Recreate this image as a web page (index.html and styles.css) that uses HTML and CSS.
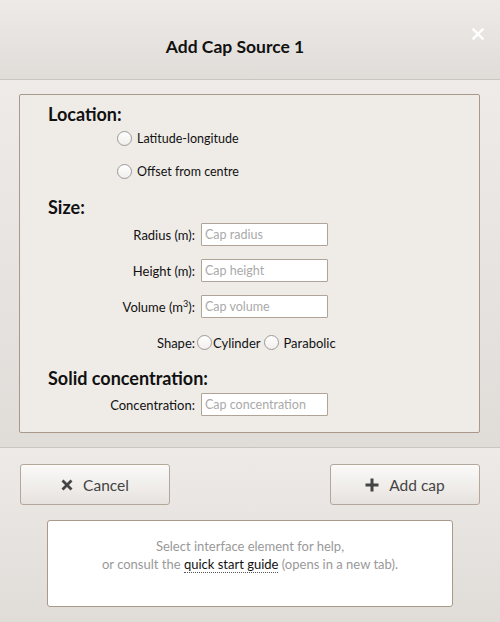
FILE: index.html
```html
<!DOCTYPE html>
<html>
<head>
<meta charset="utf-8">
<link rel="stylesheet" href="styles.css">
</head>
<body>
<div class="dialog">
  <header class="dlg-head">
    <h1 class="title">Add Cap Source 1</h1>
    <button class="close" aria-label="Close">
      <svg width="12" height="12" viewBox="0 0 12 12"><path d="M1.5 1.5 L10.5 10.5 M10.5 1.5 L1.5 10.5" stroke="#fff" stroke-width="2.4" stroke-linecap="square"/></svg>
    </button>
  </header>
  <main class="dlg-body">
    <section class="panel">
      <h2 class="heading">Location:</h2>
      <label class="radio-row"><input type="radio" name="loc" class="radio"><span>Latitude-longitude</span></label>
      <label class="radio-row second"><input type="radio" name="loc" class="radio"><span>Offset from centre</span></label>

      <h2 class="heading size">Size:</h2>
      <div class="field">
        <span class="lbl">Radius (m):</span>
        <input class="txt" type="text" placeholder="Cap radius">
      </div>
      <div class="field">
        <span class="lbl">Height (m):</span>
        <input class="txt" type="text" placeholder="Cap height">
      </div>
      <div class="field">
        <span class="lbl">Volume (m<sup>3</sup>):</span>
        <input class="txt" type="text" placeholder="Cap volume">
      </div>
      <div class="field">
        <span class="lbl">Shape:</span>
        <span class="shape">
          <label class="opt"><input type="radio" name="shape" class="radio"><span>Cylinder</span></label>
          <label class="opt"><input type="radio" name="shape" class="radio"><span>Parabolic</span></label>
        </span>
      </div>

      <h2 class="heading solid">Solid concentration:</h2>
      <div class="field conc">
        <span class="lbl">Concentration:</span>
        <input class="txt" type="text" placeholder="Cap concentration">
      </div>
    </section>
  </main>
  <footer class="dlg-foot">
    <div class="actions">
      <button class="btn">
        <svg width="12" height="12" viewBox="0 0 12 12"><path d="M1.5 1.5 L10.5 10.5 M10.5 1.5 L1.5 10.5" stroke="#444" stroke-width="2.8" stroke-linecap="butt"/></svg>
        <span>Cancel</span>
      </button>
      <button class="btn">
        <svg width="14" height="14" viewBox="0 0 14 14"><path d="M7 0.5 V13.5 M0.5 7 H13.5" stroke="#444" stroke-width="3"/></svg>
        <span>Add cap</span>
      </button>
    </div>
    <div class="help">
      <p>Select interface element for help,<br>or consult the <a class="guide" href="#">quick start guide</a> (opens in a new tab).</p>
    </div>
  </footer>
</div>
</body>
</html>
```

FILE: styles.css
```css
* { box-sizing: border-box; }
html, body { margin: 0; padding: 0; }
body {
  width: 500px;
  height: 622px;
  overflow: hidden;
  font-family: "Lato", "Liberation Sans", sans-serif;
  color: #111;
  background: #e0dcd8;
}
.dialog {
  width: 500px;
  height: 622px;
  display: flex;
  flex-direction: column;
}
.dlg-head {
  position: relative;
  height: 80px;
  flex: none;
  display: flex;
  align-items: center;
  justify-content: center;
  padding-right: 30px;
  background: linear-gradient(#eeeae7, #e0dcd8);
  border-bottom: 1px solid #c9c5c1;
}
.title {
  margin: 0;
  padding-top: 14px;
  font-size: 17.5px;
  font-weight: 700;
  color: #111;
}
.close {
  position: absolute;
  right: 15px;
  top: 27px;
  width: 14px;
  height: 14px;
  padding: 0;
  border: 0;
  background: none;
  display: flex;
  align-items: center;
  justify-content: center;
}
.dlg-body {
  height: 368px;
  flex: none;
  padding: 14px 20px 0 19px;
  background: linear-gradient(#efebe8, #e0dcd8);
  border-bottom: 1px solid #c9c5c1;
}
.panel {
  height: 339px;
  border: 1px solid #a8998b;
  border-radius: 2px;
  background: #efece8;
  padding: 6px 0 0 0;
}
.heading {
  margin: 0 0 0 28px;
  height: 26px;
  line-height: 26px;
  font-size: 18px;
  font-weight: 700;
}
.radio-row {
  display: flex;
  align-items: center;
  height: 22px;
  margin-left: 97px;
  font-size: 12.5px;
  gap: 5px;
}
.radio-row.second { margin-top: 11px; }
.radio {
  appearance: none;
  -webkit-appearance: none;
  margin: 0;
  width: 15px;
  height: 15px;
  border: 1px solid #9c9a98;
  border-radius: 50%;
  background: linear-gradient(#ffffff, #f1efed);
  flex: none;
}
.heading.size { margin-top: 12px; }
.field {
  display: grid;
  grid-template-columns: 175px 128px;
  column-gap: 6px;
  align-items: center;
  height: 23px;
  margin-top: 13px;
  font-size: 13px;
}
.heading.size + .field { margin-top: 3px; }
.lbl { text-align: right; }
.lbl sup { font-size: 9px; line-height: 0; }
.txt {
  width: 127px;
  height: 23px;
  margin: 0;
  border: 1px solid #b0a498;
  border-radius: 1px;
  background: #fff;
  padding: 0 3px;
  font-family: inherit;
  font-size: 12.5px;
  color: #222;
}
.txt::placeholder { color: #aaa; }
.shape {
  display: flex;
  align-items: center;
  margin-left: -4px;
  gap: 4px;
}
.opt {
  display: flex;
  align-items: center;
  gap: 1px;
}
.opt + .opt { gap: 4px; }
.heading.solid { margin-top: 11px; }
.heading.solid + .field { margin-top: 2px; }

.dlg-foot {
  flex: 1;
  background: linear-gradient(#eeeae7, #e0dcd8);
  padding: 16px 20px 0 20px;
}
.actions {
  display: flex;
  justify-content: space-between;
}
.btn {
  width: 150px;
  height: 41px;
  border: 1px solid #b3a79b;
  border-radius: 3px;
  background: linear-gradient(#fbfaf9, #e6e2de);
  display: flex;
  align-items: center;
  justify-content: center;
  gap: 10px;
  font-family: inherit;
  font-size: 15.5px;
  color: #444;
  padding: 0;
}
.help {
  margin: 15px 27px 0 27px;
  height: 87px;
  background: #fff;
  border: 1px solid #a8998b;
  border-radius: 3px;
  text-align: center;
}
.help p {
  margin: 0;
  padding-top: 16px;
  font-size: 13px;
  line-height: 18px;
  color: #999;
}
.guide {
  color: #111;
  text-decoration: none;
  border-bottom: 1px dotted #555;
}
```
